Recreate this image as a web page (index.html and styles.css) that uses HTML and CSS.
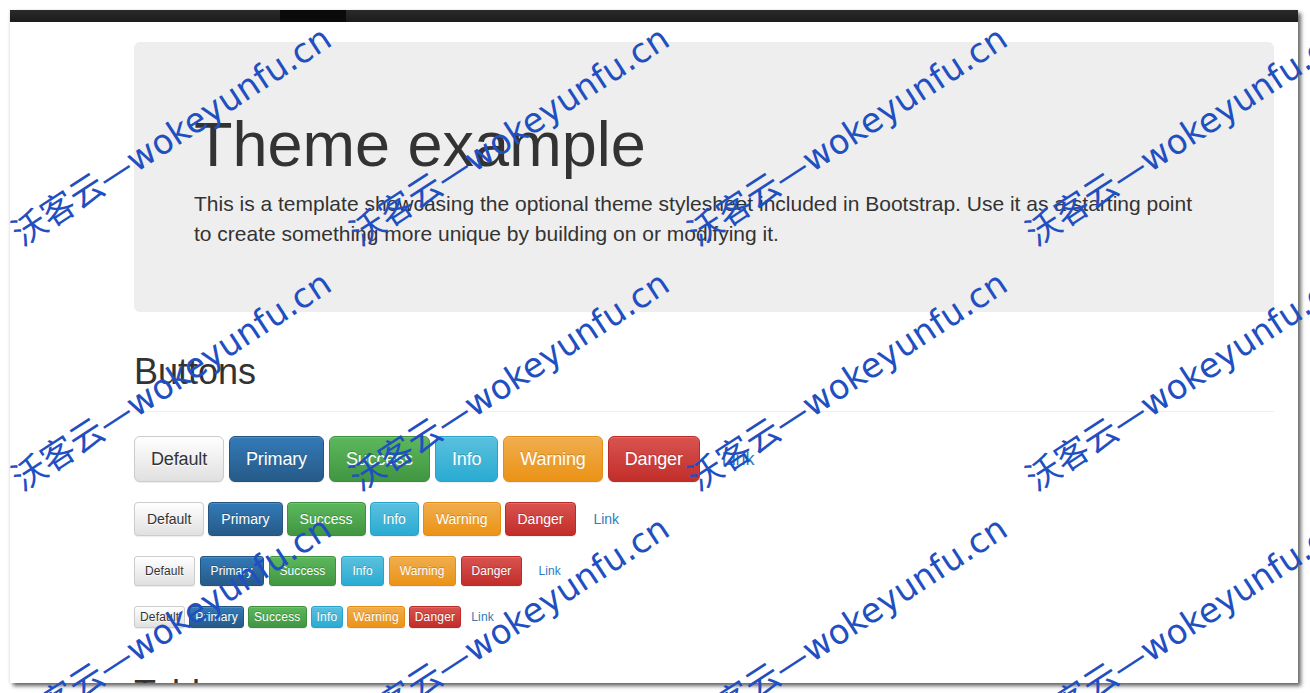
FILE: index.html
```html
<!DOCTYPE html>
<html lang="en">
<head>
<meta charset="utf-8">
<title>Theme example</title>
<link rel="stylesheet" href="styles.css">
</head>
<body>
<div class="window">
  <div class="navbar"><div class="nav-active"></div></div>
  <div class="container">
    <div class="jumbotron">
      <h1>Theme example</h1>
      <p>This is a template showcasing the optional theme stylesheet included in Bootstrap. Use it as a starting point to create something more unique by building on or modifying it.</p>
    </div>

    <div class="page-header page-header-buttons"><h1>Buttons</h1></div>

    <div class="btn-rows">
      <div class="btn-row row-lg">
        <button class="btn btn-lg btn-default">Default</button>
        <button class="btn btn-lg btn-primary">Primary</button>
        <button class="btn btn-lg btn-success">Success</button>
        <button class="btn btn-lg btn-info">Info</button>
        <button class="btn btn-lg btn-warning">Warning</button>
        <button class="btn btn-lg btn-danger">Danger</button>
        <button class="btn btn-lg btn-link">Link</button>
      </div>
      <div class="btn-row row-md">
        <button class="btn btn-default">Default</button>
        <button class="btn btn-primary">Primary</button>
        <button class="btn btn-success">Success</button>
        <button class="btn btn-info">Info</button>
        <button class="btn btn-warning">Warning</button>
        <button class="btn btn-danger">Danger</button>
        <button class="btn btn-link">Link</button>
      </div>
      <div class="btn-row row-sm">
        <button class="btn btn-sm btn-default">Default</button>
        <button class="btn btn-sm btn-primary">Primary</button>
        <button class="btn btn-sm btn-success">Success</button>
        <button class="btn btn-sm btn-info">Info</button>
        <button class="btn btn-sm btn-warning">Warning</button>
        <button class="btn btn-sm btn-danger">Danger</button>
        <button class="btn btn-sm btn-link">Link</button>
      </div>
      <div class="btn-row row-xs">
        <button class="btn btn-xs btn-default">Default</button>
        <button class="btn btn-xs btn-primary">Primary</button>
        <button class="btn btn-xs btn-success">Success</button>
        <button class="btn btn-xs btn-info">Info</button>
        <button class="btn btn-xs btn-warning">Warning</button>
        <button class="btn btn-xs btn-danger">Danger</button>
        <button class="btn btn-xs btn-link">Link</button>
      </div>
    </div>

    <div class="page-header"><h1>Tables</h1></div>
  </div>
</div>

<div class="watermark">
  <span class="wm" style="left:22px;top:218px">沃客云—wokeyunfu.cn</span>
  <span class="wm" style="left:360px;top:218px">沃客云—wokeyunfu.cn</span>
  <span class="wm" style="left:698px;top:218px">沃客云—wokeyunfu.cn</span>
  <span class="wm" style="left:1036px;top:218px">沃客云—wokeyunfu.cn</span>
  <span class="wm" style="left:22px;top:463px">沃客云—wokeyunfu.cn</span>
  <span class="wm" style="left:360px;top:463px">沃客云—wokeyunfu.cn</span>
  <span class="wm" style="left:698px;top:463px">沃客云—wokeyunfu.cn</span>
  <span class="wm" style="left:1036px;top:463px">沃客云—wokeyunfu.cn</span>
  <span class="wm" style="left:22px;top:708px">沃客云—wokeyunfu.cn</span>
  <span class="wm" style="left:360px;top:708px">沃客云—wokeyunfu.cn</span>
  <span class="wm" style="left:698px;top:708px">沃客云—wokeyunfu.cn</span>
  <span class="wm" style="left:1036px;top:708px">沃客云—wokeyunfu.cn</span>
</div>
</body>
</html>
```

FILE: styles.css
```css
* { box-sizing: border-box; }

html, body {
  margin: 0;
  padding: 0;
  background: #fff;
}

body {
  position: relative;
  width: 1310px;
  height: 693px;
  overflow: hidden;
  font-family: "Liberation Sans", Arial, "Noto Sans CJK SC", sans-serif;
  font-size: 14px;
  line-height: 1.42857143;
  color: #333;
}

.window {
  margin: 10px 0 0 10px;
  width: 1288px;
  height: 673px;
  overflow: hidden;
  background: #fff;
  box-shadow: 3px 3px 4px rgba(0, 0, 0, 0.6), -1px 0 2px rgba(0, 0, 0, 0.08);
}

.navbar {
  display: flex;
  height: 12px;
  background-image: linear-gradient(to bottom, #2a2a2a 0, #1c1c1c 100%);
}

.nav-active {
  margin-left: 270px;
  width: 66px;
  background: #0a0a0a;
}

.container {
  padding-left: 124px;
  width: 1264px;
}

.jumbotron {
  margin-top: 20px;
  margin-bottom: 30px;
  padding: 48px 60px;
  background: #eee;
  border-radius: 6px;
}

.jumbotron h1 {
  margin: 20px 0 10px;
  font-size: 63px;
  line-height: 1.1;
  font-weight: 400;
}

.jumbotron p {
  margin: 0 0 15px;
  font-size: 21px;
  line-height: 30px;
}

.page-header {
  margin: 40px 0 20px;
  padding-bottom: 9px;
  border-bottom: 1px solid #eee;
}

.page-header-buttons {
  margin-bottom: 24px;
}

.page-header h1 {
  margin: 20px 0 10px;
  font-size: 36px;
  line-height: 1.1;
  font-weight: 400;
}

.btn-rows {
  display: flex;
  flex-direction: column;
  gap: 20px;
  margin-bottom: 46px;
}

.btn-row {
  display: flex;
  align-items: flex-start;
  gap: 4px;
}

.row-lg { gap: 5px; }
.row-md { gap: 4px; }
.row-sm { gap: 5px; }
.row-xs { gap: 4px; }

.btn {
  display: inline-block;
  margin: 0;
  padding: 6px 12px;
  font-family: "Liberation Sans", Arial, sans-serif;
  font-size: 14px;
  line-height: 20px;
  font-weight: 400;
  text-align: center;
  white-space: nowrap;
  border: 1px solid transparent;
  border-radius: 4px;
  color: #fff;
  text-shadow: 0 -1px 0 rgba(0, 0, 0, 0.2);
  box-shadow: inset 0 1px 0 rgba(255, 255, 255, 0.15), 0 1px 1px rgba(0, 0, 0, 0.075);
  background-repeat: repeat-x;
}

.btn-lg {
  padding: 10px 16px;
  font-size: 18px;
  line-height: 24px;
  border-radius: 6px;
  letter-spacing: -0.15px;
}

.btn-sm {
  padding: 5px 10px;
  font-size: 12px;
  line-height: 18px;
  border-radius: 3px;
  letter-spacing: 0.08px;
}

.btn-xs {
  padding: 1px 5px;
  font-size: 12px;
  line-height: 18px;
  border-radius: 3px;
  letter-spacing: 0.18px;
}

.btn-default {
  color: #333;
  text-shadow: 0 1px 0 #fff;
  background-image: linear-gradient(to bottom, #fff 0, #e0e0e0 100%);
  border-color: #ccc;
}

.btn-primary {
  background-image: linear-gradient(to bottom, #337ab7 0, #265a88 100%);
  border-color: #245580;
}

.btn-success {
  background-image: linear-gradient(to bottom, #5cb85c 0, #419641 100%);
  border-color: #3e8f3e;
}

.btn-info {
  background-image: linear-gradient(to bottom, #5bc0de 0, #2aabd2 100%);
  border-color: #28a4c9;
}

.btn-warning {
  background-image: linear-gradient(to bottom, #f0ad4e 0, #eb9316 100%);
  border-color: #e38d13;
}

.btn-danger {
  background-image: linear-gradient(to bottom, #d9534f 0, #c12e2a 100%);
  border-color: #b92c28;
}

.btn-link {
  color: #337ab7;
  background: none;
  border-color: transparent;
  text-shadow: none;
  box-shadow: none;
}

.watermark {
  position: absolute;
  left: 0;
  top: 0;
  width: 1310px;
  height: 693px;
  overflow: hidden;
  pointer-events: none;
}

.wm {
  position: absolute;
  display: block;
  white-space: nowrap;
  font-family: "DejaVu Sans", "Noto Sans CJK SC", sans-serif;
  font-size: 34px;
  line-height: 34px;
  color: #1f4fc0;
  transform-origin: 0 29px;
  transform: rotate(-33deg);
}
```
